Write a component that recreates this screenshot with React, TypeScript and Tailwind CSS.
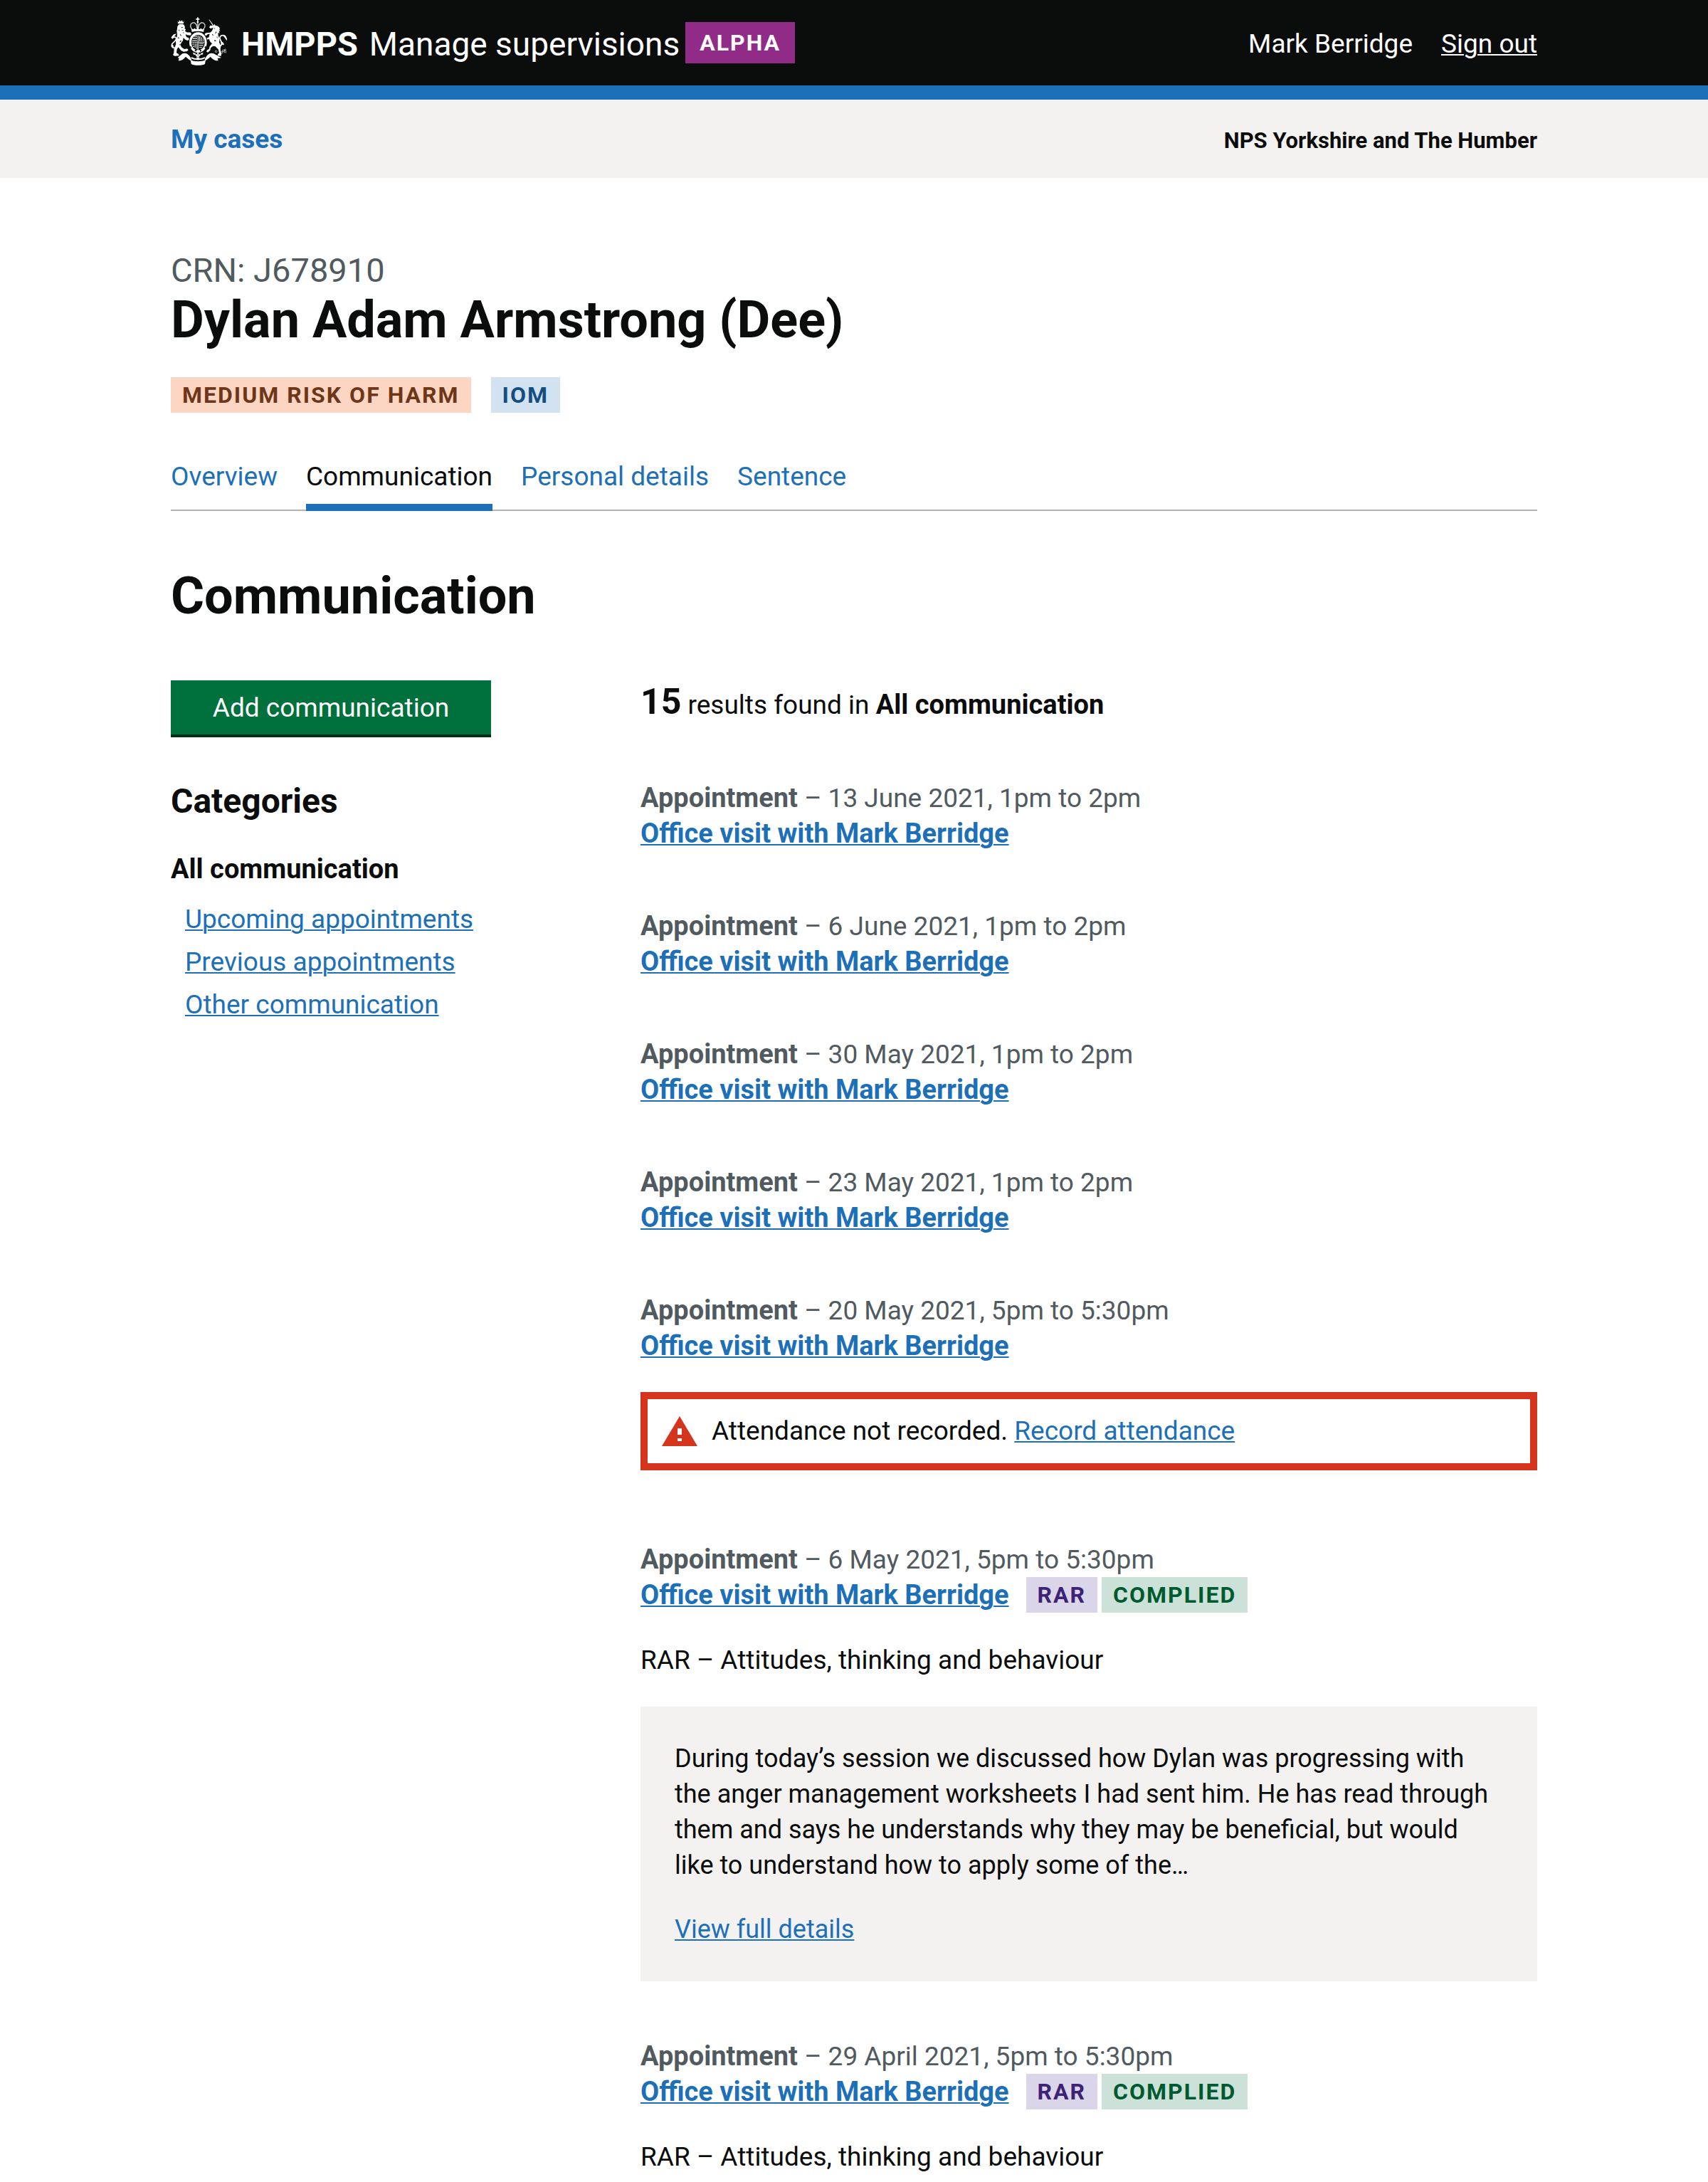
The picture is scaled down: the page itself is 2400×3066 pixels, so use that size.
import type { ReactNode } from "react";

const linkClass =
  "text-[#1d70b8] underline decoration-2 underline-offset-2 hover:text-[#003078]";

function Crest() {
  return (
    <svg viewBox="33 41 237 204" className="mb-1 h-[68px] w-[79px] shrink-0" fill="#fff" aria-hidden="true">
      {/* lion */}
      <path d="M61 58l5 5 4-9 5 6 5-6 4 9 5-5-3 14H65z" />
      <path d="M66 73c7-4 18-4 23 1l4 9-2 6 5 4-3 7 7 5c7 2 12-1 17 2l3 6-5 5-12-1-8-4 4 12 10 4 2 7-7 4-10-4-8-8-2 12-8 12c-3 8 0 14 6 19l8 5 12-2 5 5-5 6-15 2-11-5-11-14-6 8-2 16 9 5 2 7-18 1-8-4 4-10 1-18 8-18c-2-12 0-22 4-30l1-12-2-12 2-12 1-9z" />
      <path
        d="M57 171c-19 3-24-11-16-20 8-8 15-11 15-20 0-7-12-8-18 1"
        fill="none"
        stroke="#fff"
        strokeWidth="5"
      />
      <path d="M34 127l11-13 12-3-6 8-11 12zM36 154l-1 12 8 8 2-12z" />
      <path
        d="M64 69h24v2H64zM77 84l7-1-2 3-5 1zM78 95l9 1-2 3zM73 112l6 10-7-5zM72 140l8 2-9 5zM66 92l5 9-5-3zM84 104l7 5-6-1zM64 124l5 6-5 2zM68 158l7-4-2 6z"
        fill="#0b0c0c"
      />
      {/* unicorn */}
      <path d="M193 51l4 2 17 23-3 3z" />
      <path d="M212 78l6-8 3 7c10 0 17 6 20 14l-4-1 4 11-5-3 2 12-6-4 1 14c5 8 6 18 4 28l7 14-2 18 4 16-1 9-15-1 2-8 5-4-4-15-13-13-9-1-10 8-2 10-10 9-6-4 4-7 7-3 3-11 10-13c-7-4-11-10-12-18l-10 2-5 8-6-2-1-7 7-4 14-5c0-6 1-10 4-14l-9 1-7 7-6-3 1-7 9-3 13-1 8-7 5-13-12 3-5-5 5-8z" />
      <path
        d="M216 87l4 2-4 2zM224 101l-5 11 7-6zM217 137l9 4-9 3zM208 112l7 6-8-1zM228 122l3 9-5-5z"
        fill="#0b0c0c"
      />
      <path
        d="M238 165c15-6 10-19 4-28-5-10-1-19 11-19 9 0 13 7 11 14"
        fill="none"
        stroke="#fff"
        strokeWidth="5"
      />
      <path d="M251 117l11 1 8 13-1 10-8-12zM242 141l13 8 3 10-12-2z" />
      <g fill="none" stroke="#fff" strokeWidth="2">
        <circle cx="224" cy="186" r="4" />
        <circle cx="254" cy="183" r="4" />
        <circle cx="262" cy="187" r="4" />
        <circle cx="248" cy="190" r="4" />
        <circle cx="262" cy="179" r="3" />
      </g>
      {/* crown */}
      <path d="M144 42h5v5h5v5h-5v7h-5v-7h-5v-5h5z" />
      <circle cx="146.500" cy="62" r="4" />
      <g fill="none" stroke="#fff" strokeWidth="4">
        <path d="M123 92C109 78 119 62 131 65c8 2 12 9 13 25" strokeDasharray="5 1" />
        <path d="M170 92c14-14 4-30-8-27-8 2-12 9-13 25" strokeDasharray="5 1" />
        <path d="M146.500 66v24" strokeDasharray="4 2" />
      </g>
      <path d="M119 90l8 3 6-5 7 5 6-6 7 6 7-5 6 5 8-3-3 14c-16-5-33-5-49 0z" />
      {/* garter and shield */}
      <ellipse cx="148" cy="148" rx="40" ry="45" fill="#0b0c0c" />
      <path
        fillRule="evenodd"
        d="M148 105c21 0 37 19 37 43s-16 43-37 43-37-19-37-43 16-43 37-43zm0 11c-16 0-28 13-28 32s12 32 28 32 28-14 28-32-12-32-28-32z"
      />
      <g opacity="0.75">
        <path d="M125 128h19v5h-19zM123 138h21v4h-21zM130 120h14v4h-14zM152 121h6v22h-6zM161 126h4v17h-4zM168 132h3v11h-3zM124 152h7v5h-7zM134 151h4v20h-4zM141 151h4v25h-4zM127 161h5v6h-5zM152 151h20v4h-20zM152 159h18v4h-18zM152 167h13v4h-13z" />
        <path d="M146 118h4v61h-4zM121 145h54v4h-54z" />
      </g>
      <path d="M113 166l5-3 3 7-5 3zM178 163l5 3-3 7-5-3zM133 184l4-6 5 2-2 6zM159 178l4 6-6 3-2-7z" fill="#0b0c0c" />
      {/* motto ribbon */}
      <path d="M62 212l20-17c14-5 24 2 31 12l5 7c2 5 2 8 0 11-8-4-14-9-22-17-9 10-18 18-31 17l3-10z" />
      <path d="M246 213l-32-18c-14-5-24 2-31 12l-5 7c-2 5-2 8 0 11 8-4 14-9 22-17 9 10 19 18 33 17l-3-10z" />
      <path d="M116 221c14 9 50 9 64 0l-3 17c-8 8-50 8-58 0z" />
      <path d="M120 209c16 9 40 9 56 0l1 6c-16 9-42 9-58 0z" />
      {/* pendant */}
      <path d="M126 190l10 4 5 5-12 0zM170 190l-10 4-5 5 12 0zM147 188l5 9 7 4-7 6 1 9-6 7-5-7v-9l-6-6 7-4z" />
      <path d="M146 198h3v5h-3zM146 208h3v5h-3z" fill="#0b0c0c" />
    </svg>
  );
}

function WarningIcon() {
  return (
    <svg viewBox="0 0 50 42" className="h-[42px] w-[50px] shrink-0" aria-hidden="true">
      <path d="M25 0L50 42H0z" fill="#d4351c" />
      <path d="M22 17h6v9h-6zM22 31h6v4h-6z" fill="#fff" />
    </svg>
  );
}

const tagColours = {
  orange: "bg-[#fcd6c3] text-[#6e3619]",
  blue: "bg-[#d2e2f1] text-[#144e81]",
  purple: "bg-[#dbd5e9] text-[#3d2375]",
  green: "bg-[#cce2d8] text-[#005a30]",
};

function Tag({ colour, children }: { colour: keyof typeof tagColours; children: ReactNode }) {
  return (
    <strong
      className={`inline-block h-[50px] px-4 text-[32px] leading-[50px] font-bold tracking-[2px] uppercase ${tagColours[colour]}`}
    >
      {children}
    </strong>
  );
}

type Appointment = {
  when: string;
  missing?: boolean;
  complied?: boolean;
  notes?: string;
};

const appointments: Appointment[] = [
  { when: "13 June 2021, 1pm to 2pm" },
  { when: "6 June 2021, 1pm to 2pm" },
  { when: "30 May 2021, 1pm to 2pm" },
  { when: "23 May 2021, 1pm to 2pm" },
  { when: "20 May 2021, 5pm to 5:30pm", missing: true },
  {
    when: "6 May 2021, 5pm to 5:30pm",
    complied: true,
    notes:
      "During today’s session we discussed how Dylan was progressing with the anger management worksheets I had sent him. He has read through them and says he understands why they may be beneficial, but would like to understand how to apply some of the…",
  },
  { when: "29 April 2021, 5pm to 5:30pm", complied: true },
];

function AppointmentItem({ item }: { item: Appointment }) {
  return (
    <li>
      <p className="h-[50px] text-[#505a5f]">
        <strong className="text-[38px] font-bold">Appointment</strong> – {item.when}
      </p>
      <div className="flex h-[50px] items-center">
        <h3 className="text-[38px] font-bold">
          <a href="#appointment" className={linkClass}>
            Office visit with Mark Berridge
          </a>
        </h3>
        {item.complied && (
          <div className="ml-6 flex gap-1.5">
            <Tag colour="purple">RAR</Tag>
            <Tag colour="green">Complied</Tag>
          </div>
        )}
      </div>
      {item.missing && (
        <div className="mt-10 mb-[100px] flex items-center gap-5 border-10 border-[#d4351c] p-5">
          <WarningIcon />
          <p>
            Attendance not recorded.{" "}
            <a href="#record" className={linkClass}>
              Record attendance
            </a>
          </p>
        </div>
      )}
      {item.complied && <p className="mt-[42px]">RAR – Attitudes, thinking and behaviour</p>}
      {item.notes && (
        <div className="mt-10 bg-[#f3f2f1] p-12 text-[36px]">
          <p>{item.notes}</p>
          <p className="mt-10">
            <a href="#details" className={linkClass}>
              View full details
            </a>
          </p>
        </div>
      )}
    </li>
  );
}

const tabs = ["Overview", "Communication", "Personal details", "Sentence"];
const categories = ["Upcoming appointments", "Previous appointments", "Other communication"];

export default function App() {
  return (
    <div className="bg-white font-['Roboto',sans-serif] text-[37px] leading-[50px] text-[#0b0c0c]">
      <header className="border-b-20 border-[#1d70b8] bg-[#0b0c0c] text-white">
        <div className="mx-auto flex h-[120px] w-full max-w-[1920px] items-center justify-between">
          <div className="flex items-center">
            <Crest />
            <a href="#home" className="ml-5 flex items-baseline gap-4 pt-1">
              <strong className="text-[47px] font-bold">HMPPS</strong>
              <span className="text-[46px]">Manage supervisions</span>
            </a>
            <strong className="ml-2 bg-[#912b88] px-5 text-[32px] leading-[58px] font-bold tracking-[2px]">
              ALPHA
            </strong>
          </div>
          <div className="flex gap-10 pt-1">
            <span>Mark Berridge</span>
            <a href="#signout" className="underline decoration-2 underline-offset-2">
              Sign out
            </a>
          </div>
        </div>
      </header>

      <nav aria-label="Primary" className="bg-[#f3f2f1]">
        <div className="mx-auto flex h-[110px] w-full max-w-[1920px] items-baseline justify-between pt-[31px] font-bold">
          <a href="#cases" className="text-[#1d70b8]">
            My cases
          </a>
          <span className="text-[31px]">NPS Yorkshire and The Humber</span>
        </div>
      </nav>

      <main className="mx-auto w-full max-w-[1920px] pt-[100px]">
        <p className="text-[47px] leading-[60px] text-[#505a5f]">CRN: J678910</p>
        <h1 className="text-[72px] leading-[80px] font-bold">Dylan Adam Armstrong (Dee)</h1>
        <div className="mt-10 flex gap-7">
          <Tag colour="orange">Medium risk of harm</Tag>
          <Tag colour="blue">IOM</Tag>
        </div>

        <nav aria-label="Case" className="mt-[65px] flex gap-10 border-b-2 border-[#b1b4b6]">
          {tabs.map((tab) =>
            tab === "Communication" ? (
              <a
                key={tab}
                href="#tab"
                aria-current="page"
                className="-mb-0.5 border-b-10 border-[#1d70b8] pb-[13px]"
              >
                {tab}
              </a>
            ) : (
              <a key={tab} href="#tab" className="text-[#1d70b8]">
                {tab}
              </a>
            ),
          )}
        </nav>

        <h2 className="mt-20 text-[72px] leading-[80px] font-bold">Communication</h2>

        <div className="mt-[78px] grid grid-cols-3 gap-[60px]">
          <aside>
            <button
              type="button"
              className="block h-[76px] w-[450px] bg-[#00703c] pt-0.5 text-white shadow-[0_4px_0_#002d18]"
            >
              Add communication
            </button>
            <h3 className="mt-16 text-[48px] leading-[60px] font-bold">Categories</h3>
            <p className="mt-10 text-[38px] font-bold">All communication</p>
            <ul className="mt-[21px] ml-5 space-y-2.5">
              {categories.map((name) => (
                <li key={name}>
                  <a href="#category" className={linkClass}>
                    {name}
                  </a>
                </li>
              ))}
            </ul>
          </aside>

          <section className="col-span-2 pt-[5px]" aria-label="Results">
            <p>
              <strong className="text-[50px] font-bold">15</strong> results found in{" "}
              <strong className="text-[38px] font-bold">All communication</strong>
            </p>
            <ul className="mt-20 space-y-20">
              {appointments.map((item) => (
                <AppointmentItem key={item.when} item={item} />
              ))}
            </ul>
          </section>
        </div>
      </main>
    </div>
  );
}
